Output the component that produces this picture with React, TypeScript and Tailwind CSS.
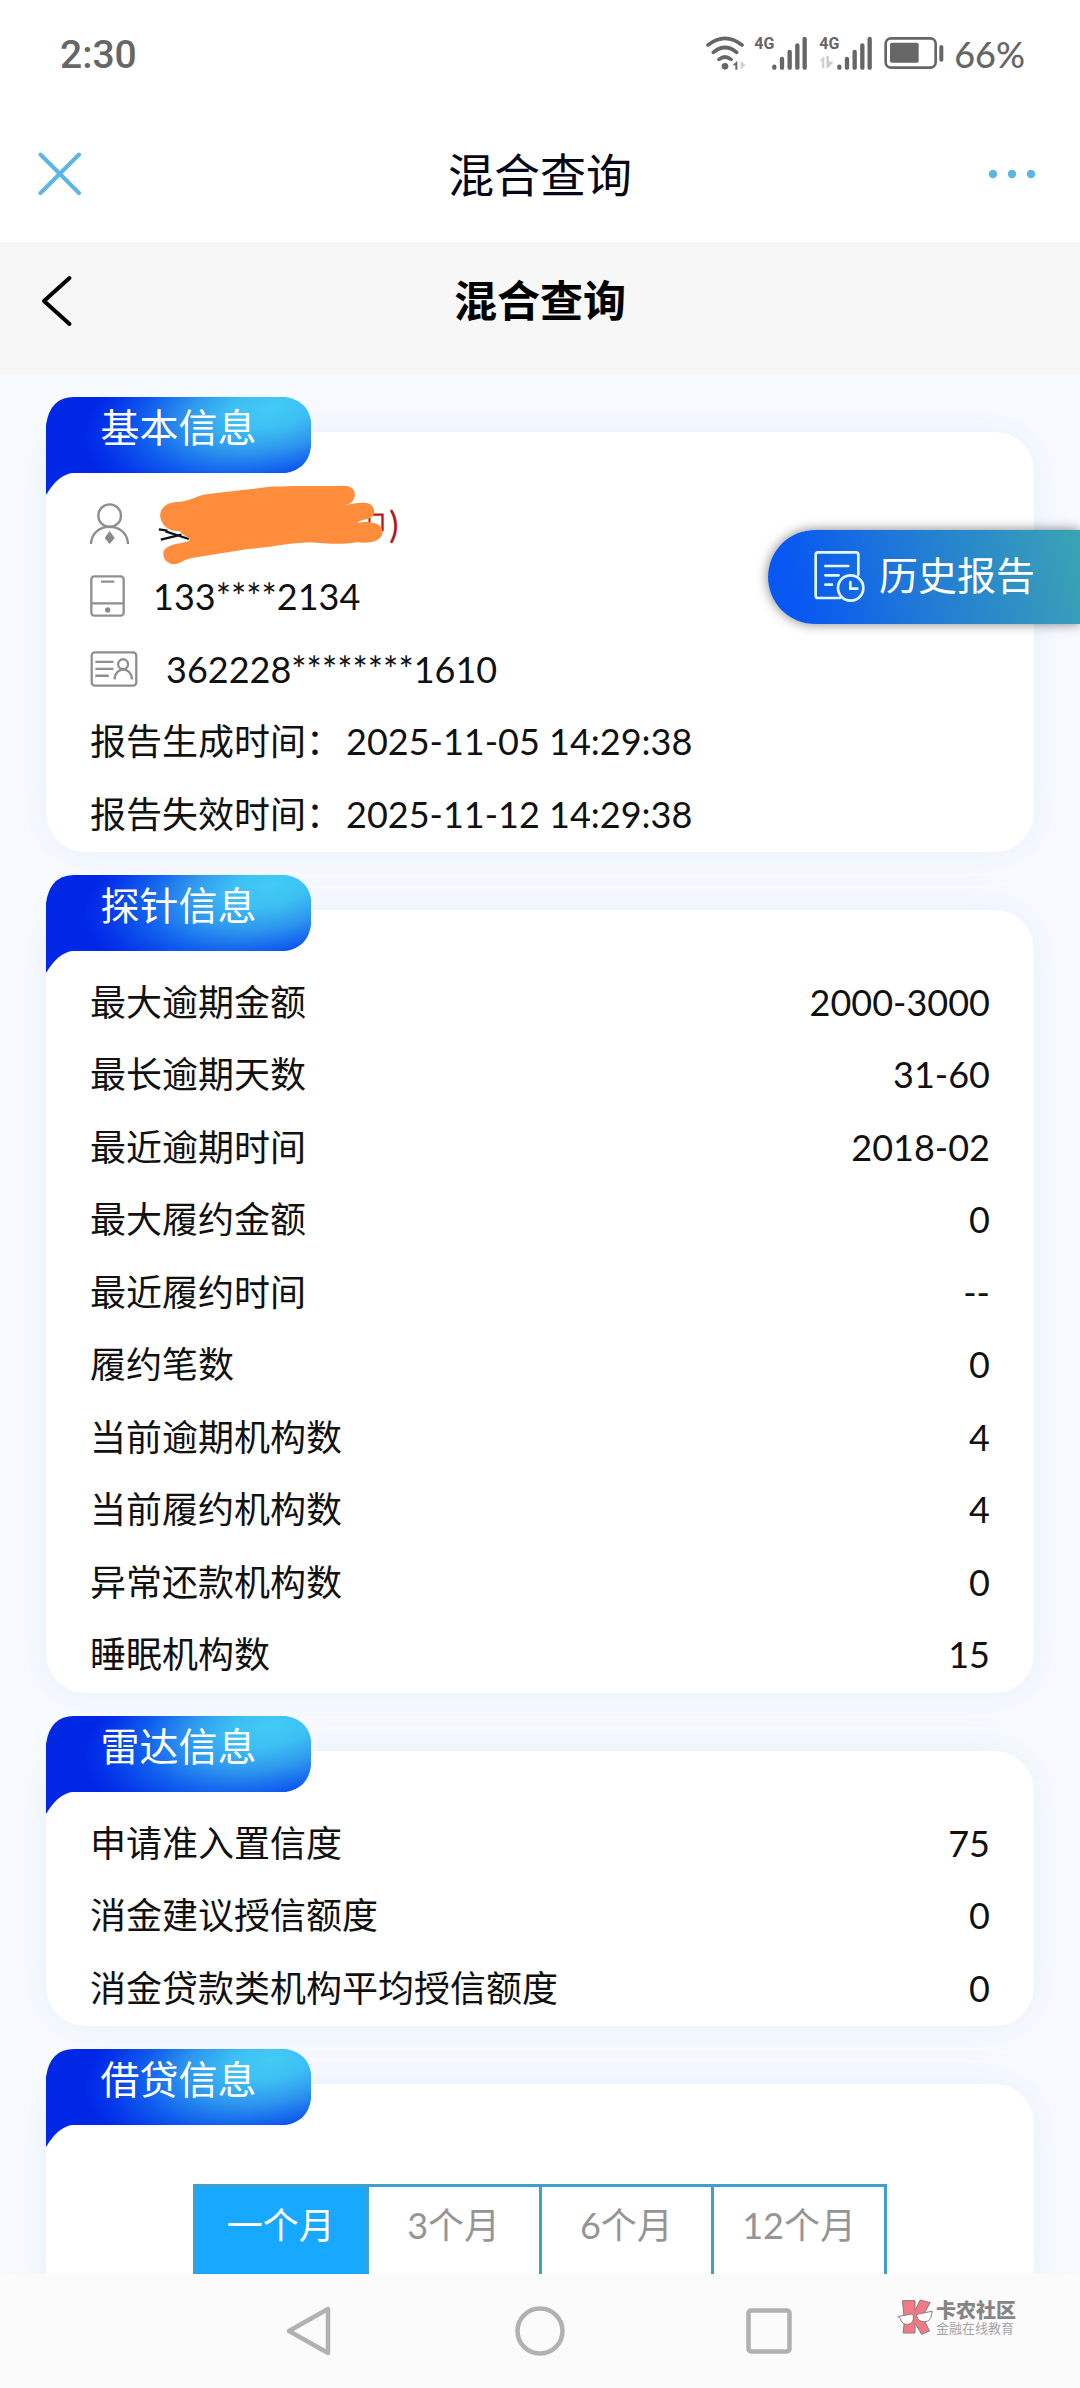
import { useState, type ReactNode } from "react";

type Item = { label: string; value: string };

const probe: Item[] = [
  { label: "最大逾期金额", value: "2000-3000" },
  { label: "最长逾期天数", value: "31-60" },
  { label: "最近逾期时间", value: "2018-02" },
  { label: "最大履约金额", value: "0" },
  { label: "最近履约时间", value: "--" },
  { label: "履约笔数", value: "0" },
  { label: "当前逾期机构数", value: "4" },
  { label: "当前履约机构数", value: "4" },
  { label: "异常还款机构数", value: "0" },
  { label: "睡眠机构数", value: "15" },
];

const radar: Item[] = [
  { label: "申请准入置信度", value: "75" },
  { label: "消金建议授信额度", value: "0" },
  { label: "消金贷款类机构平均授信额度", value: "0" },
];

const periods = ["一个月", "3个月", "6个月", "12个月"];

function Signal({ data }: { data?: boolean }) {
  return (
    <div className="flex h-[34px] items-start">
      <div className="flex w-[18px] flex-col items-start">
        <span className="font-['Liberation_Sans_Narrow','Roboto',sans-serif] text-[16px] leading-[16px] font-bold">4G</span>
        {data && (
          <svg viewBox="0 0 48 36" className="mt-1 h-3 w-4" fill="#cfcfcf">
            <path d="M2 16 16 0V36H9V16ZM22 0h8v16l14 2-16 18h-6Z" />
          </svg>
        )}
      </div>
      <svg viewBox="0 0 105 102" className="h-[34px] w-[35px]" stroke="currentColor" strokeWidth="13" strokeLinecap="round">
        <path d="M7 92v3M30 69v26M53 48v47M76 28v67M98 9v86" />
      </svg>
    </div>
  );
}

function StatusBar() {
  return (
    <div className="flex h-[108px] items-center justify-between pr-[55px] pl-[60px] text-[#666]">
      <span className="pt-1 font-['Roboto',sans-serif] text-[39px] leading-[44px] font-medium">2:30</span>
      <div className="flex items-center">
        <svg viewBox="0 0 120 102" className="h-[34px] w-10" fill="none" stroke="currentColor" strokeWidth="11" strokeLinecap="round">
          <path d="M6 27Q57-13 108 27M22 49Q57 20 92 49M39 70Q57 56 75 70" />
          <circle cx="57" cy="91" r="10" fill="currentColor" stroke="none" />
          <path d="M80 88 94 74V101H88V88Z" fill="currentColor" stroke="none" />
          <path d="M104 74 118 87 104 101Z" fill="#cfcfcf" stroke="none" />
        </svg>
        <div className="ml-2">
          <Signal />
        </div>
        <div className="ml-3">
          <Signal data />
        </div>
        <svg viewBox="0 0 178 96" className="ml-3 h-8 w-[60px]" fill="none" stroke="currentColor" strokeWidth="8">
          <rect x="4" y="4" width="150" height="88" rx="16" />
          <rect x="17" y="17" width="86" height="60" rx="5" fill="currentColor" stroke="none" />
          <path d="M171 30V68" strokeWidth="12" strokeLinecap="round" />
        </svg>
        <span className="ml-[10px] pt-[2px] text-[36px] leading-[44px] font-medium">66%</span>
      </div>
    </div>
  );
}

function Section({ title, grow, children }: { title: string; grow?: boolean; children: ReactNode }) {
  return (
    <section className={grow ? "relative flex grow flex-col pt-[35px]" : "relative pt-[35px]"}>
      <div className={grow ? "grow rounded-t-[40px] bg-white px-11 pt-14 shadow-[0_0_40px_rgba(90,110,210,0.09)]" : "rounded-[40px] bg-white px-11 pt-14 pb-[2px] shadow-[0_0_40px_rgba(90,110,210,0.09)]"}>
        {children}
      </div>
      <div className="absolute top-0 left-0 h-[98px] w-[265px]">
        <svg viewBox="0 0 265 98" className="absolute inset-0 h-full w-full">
          <defs>
            <radialGradient id={"tab-" + title} gradientUnits="userSpaceOnUse" cx="0" cy="0" r="1" gradientTransform="translate(226 10) rotate(-12) scale(190 92)">
              <stop offset="0" stopColor="#42cbf5" />
              <stop offset="0.22" stopColor="#3cc0f4" />
              <stop offset="0.45" stopColor="#2f98ee" />
              <stop offset="0.7" stopColor="#0f5cee" />
              <stop offset="0.9" stopColor="#0434ea" />
              <stop offset="1" stopColor="#0027e6" />
            </radialGradient>
          </defs>
          <path d="M0 98V28Q4 0 28 0H240Q262 4 265 24V50Q262 72 240 76H26Q12 78 0 98Z" fill={"url(#tab-" + title + ")"} />
        </svg>
        <h2 className="relative text-center text-[39px] leading-[60px] text-white">{title}</h2>
      </div>
    </section>
  );
}

function Row({ children }: { children: ReactNode }) {
  return <div className="flex items-center justify-between odd:h-[72px] even:h-[73px]">{children}</div>;
}

function ItemList({ items }: { items: Item[] }) {
  return (
    <dl>
      {items.map((item) => (
        <Row key={item.label}>
          <dt>{item.label}</dt>
          <dd>{item.value}</dd>
        </Row>
      ))}
    </dl>
  );
}

function BasicInfo() {
  return (
    <div>
      <Row>
        <div className="relative flex items-center">
          <svg viewBox="27 78 117 123" className="h-[41px] w-[39px]" fill="none" stroke="#8f8f8f" strokeWidth="7">
            <circle cx="86" cy="116" r="34" />
            <path d="M30 201C32 132 139 132 141 201" />
            <path d="M86 162 101 183 86 201 71 183Z" fill="#8a8a8a" stroke="none" />
          </svg>
          <svg viewBox="234 10 680 249" className="absolute top-[-15px] left-[68px] h-[83px] w-[227px]" fill="none">
            <path d="M236 149 262 153M242 180 304 165M256 155 326 178" stroke="#111" strokeWidth="7" />
            <path d="M862 105H907V155" stroke="#b8161c" strokeWidth="7" />
            <path d="M868 105V134M828 120V134" stroke="#b8161c" strokeWidth="6" />
            <path
              fill="#ff8d3c"
              d="M300 66C330 66 345 48 380 44 440 36 520 28 560 22 640 18 740 20 795 19 815 18 828 35 823 52 820 66 812 70 798 77 820 70 850 66 868 72 886 82 886 108 872 114 862 119 840 120 830 130 860 124 880 128 893 134 910 144 912 166 896 178 880 190 850 191 830 188 780 196 740 192 690 188 620 190 560 206 500 208 460 216 400 224 340 234 310 238 300 253 280 254 258 252 246 232 250 216 256 196 290 192 322 186L330 179C312 166 300 160 300 154 270 158 244 140 240 110 239 82 262 66 300 66Z"
            />
          </svg>
          <span className="ml-[260px] text-[#b8161c]">)</span>
        </div>
      </Row>
      <Row>
        <div className="flex items-center">
          <svg viewBox="27 293 105 126" className="h-[42px] w-[35px]" fill="none" stroke="#8f8f8f" strokeWidth="7">
            <rect x="31" y="297" width="97" height="118" rx="9" />
            <path d="M30 378H129M60 313H100" />
            <circle cx="80" cy="398" r="8" fill="#8a8a8a" stroke="none" />
          </svg>
          <span className="ml-7">133****2134</span>
        </div>
      </Row>
      <Row>
        <div className="flex items-center">
          <svg viewBox="27 521 143 109" className="h-9 w-12" fill="none" stroke="#8f8f8f" strokeWidth="7">
            <rect x="31" y="525" width="135" height="101" rx="10" />
            <path d="M42 554H97M42 575H97M42 596H83" />
            <circle cx="126" cy="561" r="15" />
            <path d="M100 607C102 567 151 567 153 607" />
          </svg>
          <span className="ml-7">362228********1610</span>
        </div>
      </Row>
      <Row>
        <p>
          报告生成时间：<time className="ml-1">2025-11-05 14:29:38</time>
        </p>
      </Row>
      <Row>
        <p>
          报告失效时间：<time className="ml-1">2025-11-12 14:29:38</time>
        </p>
      </Row>
    </div>
  );
}

function Periods() {
  const [active, setActive] = useState(0);
  return (
    <div className="mx-auto mt-[44px] flex w-[694px] max-w-full border-[3px] border-[#3fa0cc]">
      {periods.map((period, i) => (
        <button
          key={period}
          type="button"
          aria-pressed={i === active}
          onClick={() => setActive(i)}
          className={
            i === active
              ? "flex h-[108px] flex-1 items-start justify-center bg-[#16a9ff] pt-3 leading-[52px] text-white"
              : "flex h-[108px] flex-1 items-start justify-center border-l-[3px] border-[#3fa0cc] pt-3 leading-[52px] text-[#959595] first:border-l-0"
          }
        >
          {period}
        </button>
      ))}
    </div>
  );
}

function NavBar() {
  return (
    <nav className="relative flex h-[114px] shrink-0 items-center justify-center gap-[180px] bg-[#fbfbfb]">
      <button type="button" aria-label="返回">
        <svg viewBox="0 0 50 50" className="h-[50px] w-[50px]" fill="none" stroke="#b1b1b1" strokeWidth="4.5" strokeLinejoin="round">
          <path d="M4 25 43 3V47Z" />
        </svg>
      </button>
      <button type="button" aria-label="主屏幕">
        <svg viewBox="0 0 50 50" className="h-[50px] w-[50px]" fill="none" stroke="#b1b1b1" strokeWidth="4.5">
          <circle cx="25" cy="25" r="22.5" />
        </svg>
      </button>
      <button type="button" aria-label="最近任务">
        <svg viewBox="0 0 50 50" className="h-[50px] w-[50px]" fill="none" stroke="#b1b1b1" strokeWidth="4.5">
          <rect x="3.5" y="4.5" width="41" height="41" rx="2.5" />
        </svg>
      </button>
      <div className="absolute top-6 right-16 flex items-center">
        <svg viewBox="28 28 108 112" className="h-[37px] w-9" stroke="#857b7b" strokeWidth="3" strokeLinejoin="round">
          <path d="M44 36H82V66L98 34 128 42 104 84 126 128 102 138 82 104V134H46L50 98Z" fill="#f27a84" />
          <path d="M30 84 76 76Q82 106 60 108 40 108 38 90ZM86 78 134 68 132 78Q130 98 112 100 92 100 88 84Z" fill="#fff" />
        </svg>
        <div className="ml-[3px] text-[#858585]">
          <p className="text-[20px] leading-[22px] font-black">卡农社区</p>
          <p className="text-[13px] leading-[14px] text-[#a5a5a5]">金融在线教育</p>
        </div>
      </div>
    </nav>
  );
}

export default function App() {
  return (
    <div className="flex h-screen flex-col overflow-hidden bg-white font-['Lato','Noto_Sans_CJK_SC',sans-serif] text-[36px] leading-[52px] text-[#111]">
      <StatusBar />
      <header className="grid h-[135px] shrink-0 grid-cols-[1fr_auto_1fr] items-center px-[38px]">
        <button type="button" aria-label="关闭" className="justify-self-start">
          <svg viewBox="0 0 44 44" className="h-11 w-11" stroke="#5bb5e6" strokeWidth="4" strokeLinecap="round">
            <path d="M2.500 2.500 41 41M41 2.500 2.500 41" />
          </svg>
        </button>
        <h1 className="pt-[2px] text-[46px] leading-[60px] text-[#070716]">混合查询</h1>
        <button type="button" aria-label="更多" className="justify-self-end">
          <svg viewBox="0 0 60 44" className="h-11 w-[60px]" fill="#5bb5e6">
            <circle cx="11" cy="22" r="4.200" />
            <circle cx="30" cy="22" r="4.200" />
            <circle cx="49" cy="22" r="4.200" />
          </svg>
        </button>
      </header>
      <div className="grid h-[133px] shrink-0 grid-cols-[1fr_auto_1fr] bg-[#f7f7f7] px-10 pt-[29px]">
        <button type="button" aria-label="返回上一页" className="self-start justify-self-start pt-1">
          <svg viewBox="0 0 34 54" className="h-[54px] w-[34px]" fill="none" stroke="#000" strokeWidth="4" strokeLinecap="round" strokeLinejoin="round">
            <path d="M29.500 3 4 26 29.500 49" />
          </svg>
        </button>
        <h2 className="text-[43px] leading-[60px] font-bold text-black">混合查询</h2>
      </div>
      <main className="relative flex min-h-0 grow flex-col gap-[23px] overflow-y-auto bg-[#f7fbff] px-[46px] pt-[22px] [scrollbar-width:none]">
        <Section title="基本信息">
          <BasicInfo />
        </Section>
        <Section title="探针信息">
          <ItemList items={probe} />
        </Section>
        <Section title="雷达信息">
          <ItemList items={radar} />
        </Section>
        <Section title="借贷信息" grow>
          <Periods />
        </Section>
        <button
          type="button"
          className="absolute top-[155px] right-0 flex h-[94px] w-[312px] items-center rounded-l-full bg-linear-[75deg,#0757f2_10%,#1f78d8_45%,#3ba4b4] pl-[46px] text-[39px] leading-[60px] text-white shadow-[0_0_12px_rgba(0,0,0,0.5)]"
        >
          <svg viewBox="160 97 153 153" className="h-[51px] w-[51px] text-[#e4f8ff]" fill="none" stroke="currentColor" strokeWidth="8" strokeLinecap="round">
            <path d="M238 238H172Q165 238 165 231V108Q165 101 172 101H286Q293 101 293 108V168M194 142H263M194 170H234M194 198H214" />
            <circle cx="270" cy="208" r="38" />
            <path d="M269 190V210H290" />
          </svg>
          <span className="ml-[14px] pb-1">历史报告</span>
        </button>
      </main>
      <NavBar />
    </div>
  );
}
